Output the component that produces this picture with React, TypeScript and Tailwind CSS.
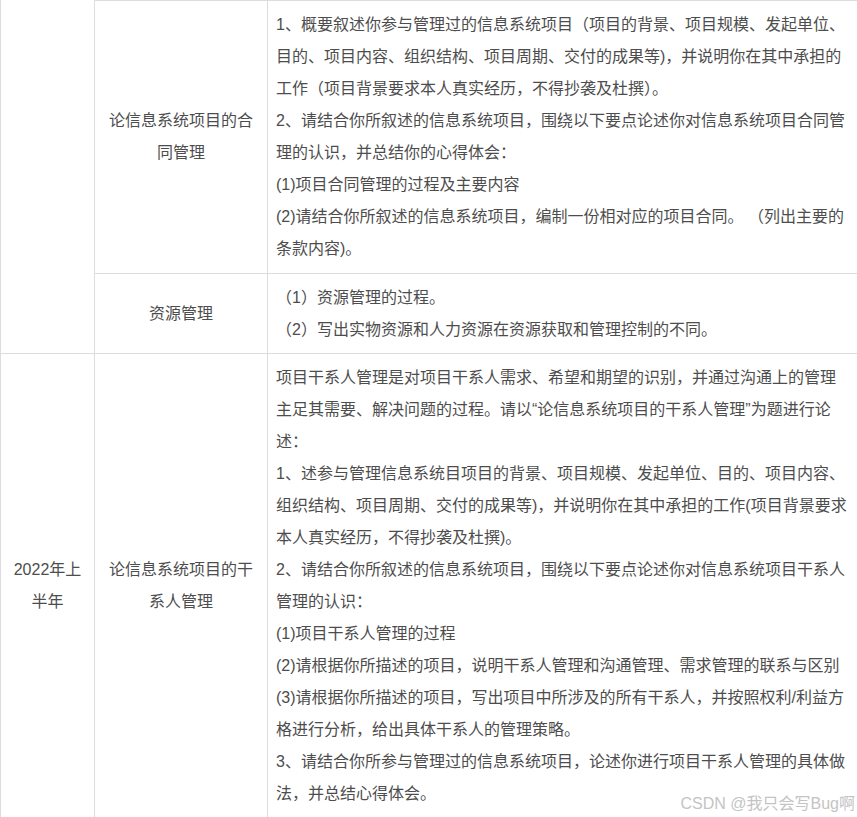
import React from "react";

const font = {
  fontFamily:
    '"Liberation Sans", "Noto Sans CJK SC", "Microsoft YaHei", sans-serif',
};

const row1 = [
  "1、概要叙述你参与管理过的信息系统项目（项目的背景、项目规模、发起单位、",
  "目的、项目内容、组织结构、项目周期、交付的成果等)，并说明你在其中承担的",
  "工作（项目背景要求本人真实经历，不得抄袭及杜撰）。",
  "2、请结合你所叙述的信息系统项目，围绕以下要点论述你对信息系统项目合同管",
  "理的认识，并总结你的心得体会：",
  "(1)项目合同管理的过程及主要内容",
  "(2)请结合你所叙述的信息系统项目，编制一份相对应的项目合同。 （列出主要的",
  "条款内容)。",
];

const row2 = ["（1）资源管理的过程。", "（2）写出实物资源和人力资源在资源获取和管理控制的不同。"];

const row3 = [
  "项目干系人管理是对项目干系人需求、希望和期望的识别，并通过沟通上的管理",
  "主足其需要、解决问题的过程。请以“论信息系统项目的干系人管理”为题进行论",
  "述：",
  "1、述参与管理信息系统目项目的背景、项目规模、发起单位、目的、项目内容、",
  "组织结构、项目周期、交付的成果等)，并说明你在其中承担的工作(项目背景要求",
  "本人真实经历，不得抄袭及杜撰)。",
  "2、请结合你所叙述的信息系统项目，围绕以下要点论述你对信息系统项目干系人",
  "管理的认识：",
  "(1)项目干系人管理的过程",
  "(2)请根据你所描述的项目，说明干系人管理和沟通管理、需求管理的联系与区别",
  "(3)请根据你所描述的项目，写出项目中所涉及的所有干系人，并按照权利/利益方",
  "格进行分析，给出具体干系人的管理策略。",
  "3、请结合你所参与管理过的信息系统项目，论述你进行项目干系人管理的具体做",
  "法，并总结心得体会。",
];

function Lines({ lines }: { lines: string[] }) {
  return (
    <>
      {lines.map((l, i) => (
        <div key={i} className="whitespace-pre">
          {l}
        </div>
      ))}
    </>
  );
}

export default function App() {
  return (
    <div
      className="relative h-[817px] w-[857px] overflow-hidden bg-white text-[16px] leading-[32px] text-[#4d4d4d]"
      style={font}
    >
      <div className="grid w-[857px] grid-cols-[95px_173px_589px]">
        {/* column 1, spans rows 1-2 */}
        <div className="row-span-2 border-x border-b border-[#dddddd]" />
        {/* row 1 */}
        <div className="flex items-center justify-center border-r border-t border-b border-[#dddddd] px-2 pt-2 pb-2 text-center">
          <div>
            论信息系统项目的合
            <br />
            同管理
          </div>
        </div>
        <div className="overflow-hidden border-t border-b border-[#dddddd] px-2 pt-2 pb-2">
          <Lines lines={row1} />
        </div>
        {/* row 2 */}
        <div className="flex items-center justify-center border-r border-b border-[#dddddd] px-2 pt-2 pb-[7px] text-center">
          资源管理
        </div>
        <div className="overflow-hidden border-b border-[#dddddd] px-2 pt-2 pb-[7px]">
          <Lines lines={row2} />
        </div>
        {/* row 3 */}
        <div className="flex items-center justify-center border-x border-[#dddddd] px-2 pt-2 pb-2 text-center">
          <div>
            2022年上
            <br />
            半年
          </div>
        </div>
        <div className="flex items-center justify-center border-r border-[#dddddd] px-2 pt-2 pb-2 text-center">
          <div>
            论信息系统项目的干
            <br />
            系人管理
          </div>
        </div>
        <div className="overflow-hidden px-2 pt-2 pb-2">
          <Lines lines={row3} />
        </div>
      </div>
      <div className="absolute bottom-[3px] right-[2px] text-[16px] leading-[20px] text-[#c4c4c4]">
        CSDN @我只会写Bug啊
      </div>
    </div>
  );
}
